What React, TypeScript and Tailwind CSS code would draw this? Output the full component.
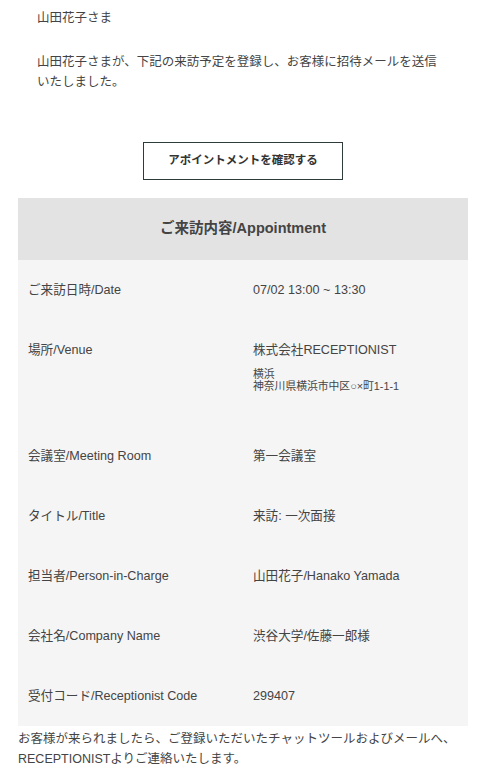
const rows: { label: string; value: string; address?: string[] }[] = [
  { label: "ご来訪日時/Date", value: "07/02 13:00 ~ 13:30" },
  {
    label: "場所/Venue",
    value: "株式会社RECEPTIONIST",
    address: ["横浜", "神奈川県横浜市中区○×町1-1-1"],
  },
  { label: "会議室/Meeting Room", value: "第一会議室" },
  { label: "タイトル/Title", value: "来訪: 一次面接" },
  { label: "担当者/Person-in-Charge", value: "山田花子/Hanako Yamada" },
  { label: "会社名/Company Name", value: "渋谷大学/佐藤一郎様" },
  { label: "受付コード/Receptionist Code", value: "299407" },
];

export default function App() {
  return (
    <div
      className="w-[491px] h-[777px] overflow-hidden bg-white text-[#444]"
      style={{ fontFamily: '"Liberation Sans", Arial, "Noto Sans CJK JP", sans-serif' }}
    >
      {/* Greeting */}
      <div className="pl-[37px] pt-[8px] w-[442px] text-[12.5px]">
        <p className="leading-5">山田花子さま</p>
        <p className="mt-[24px] leading-5">
          山田花子さまが、下記の来訪予定を登録し、お客様に招待メールを送信いたしました。
        </p>
      </div>

      {/* Button */}
      <div className="mx-[18px] w-[450px] flex justify-center mt-[50px]">
        <div className="w-[200px] h-[38px] border border-[#2f3b3b] flex items-center justify-center text-[11.5px] font-bold text-[#333]">
          アポイントメントを確認する
        </div>
      </div>

      {/* Appointment table */}
      <div className="mx-[18px] mt-[18px] w-[450px]">
        <div className="h-[62px] bg-[#e3e3e3] flex items-center justify-center text-[14.5px] font-bold text-[#444]">
          ご来訪内容/Appointment
        </div>
        <div className="bg-[#f5f5f5] text-[12.6px]">
          {rows.map((row) => (
            <div key={row.label} className="flex py-5">
              <div className="w-[235px] pl-[10px] leading-5 shrink-0">{row.label}</div>
              <div className="flex-1">
                <div className="leading-5">{row.value}</div>
                {row.address && (
                  <div className="mt-[8px] mb-[14px] text-[10.8px] leading-[12px]">
                    {row.address.map((line) => (
                      <div key={line}>{line}</div>
                    ))}
                  </div>
                )}
              </div>
            </div>
          ))}
        </div>
      </div>

      {/* Footer */}
      <p className="px-[18px] pt-[3px] text-[12.5px] leading-5">
        お客様が来られましたら、ご登録いただいたチャットツールおよびメールへ、RECEPTIONISTよりご連絡いたします。
      </p>
    </div>
  );
}
